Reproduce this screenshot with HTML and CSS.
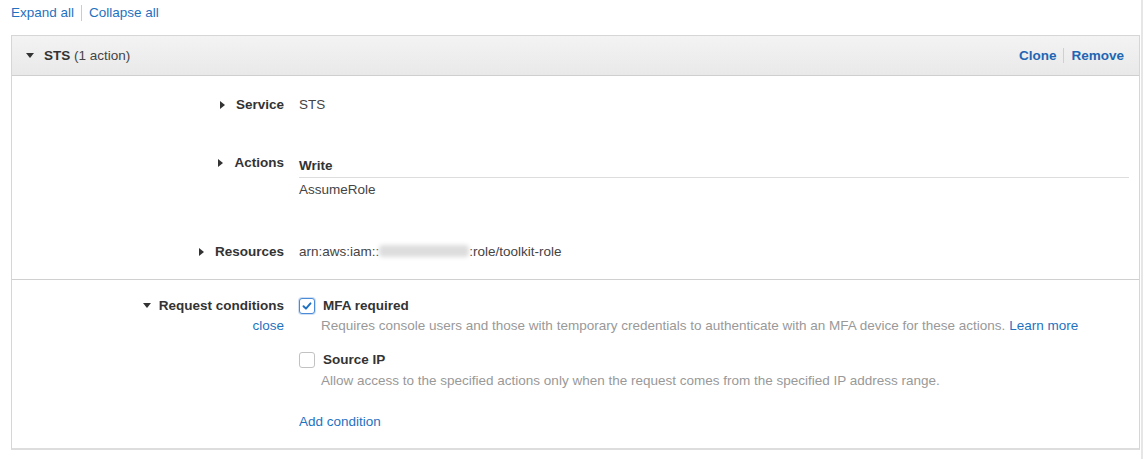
FILE: index.html
```html
<!DOCTYPE html>
<html>
<head>
<meta charset="utf-8">
<link rel="stylesheet" href="styles.css">
</head>
<body>
<div class="page">
  <div class="toolbar">
    <a class="link">Expand all</a><span class="sep"></span><a class="link">Collapse all</a>
  </div>
  <div class="panel">
    <div class="panel-head">
      <div class="head-title">
        <span class="tri-down"></span>
        <b>STS</b>&nbsp;(1 action)
      </div>
      <div class="head-actions">
        <a class="hlink">Clone</a><span class="sep sep-head"></span><a class="hlink">Remove</a>
      </div>
    </div>
    <div class="panel-body">
      <div class="row row-service">
        <div class="label"><span class="tri-right"></span>Service</div>
        <div class="value">STS</div>
      </div>
      <div class="row row-actions">
        <div class="label"><span class="tri-right"></span>Actions</div>
        <div class="value">
          <div class="group-title">Write</div>
          <div class="group-item">AssumeRole</div>
        </div>
      </div>
      <div class="row row-resources">
        <div class="label"><span class="tri-right"></span>Resources</div>
        <div class="value">arn:aws:iam::<span class="blur"></span>:role/toolkit-role</div>
      </div>
    </div>
    <div class="conditions">
      <div class="label cond-label">
        <div><span class="tri-down tri-small"></span>Request conditions</div>
        <a class="link">close</a>
      </div>
      <div class="cond-list">
        <div class="cond">
          <div class="cond-title">
            <span class="checkbox checked"><svg viewBox="0 0 16 16" width="16" height="16"><path d="M4 8.3 L6.8 11 L12 5" fill="none" stroke="#1f6fc5" stroke-width="2.2" stroke-linecap="round" stroke-linejoin="round"/></svg></span>
            <b>MFA required</b>
          </div>
          <div class="cond-desc">Requires console users and those with temporary credentials to authenticate with an MFA device for these actions. <a class="link">Learn more</a></div>
        </div>
        <div class="cond cond-2">
          <div class="cond-title">
            <span class="checkbox"></span>
            <b>Source IP</b>
          </div>
          <div class="cond-desc">Allow access to the specified actions only when the request comes from the specified IP address range.</div>
        </div>
        <a class="link add">Add condition</a>
      </div>
    </div>
  </div>
</div>
</body>
</html>
```

FILE: styles.css
```css
* { box-sizing: border-box; }
html, body { margin: 0; padding: 0; background: #fff; }
body {
  font-family: "Liberation Sans", Arial, sans-serif;
  font-size: 13.5px;
  color: #444;
}
.page {
  width: 1143px;
  height: 459px;
  border-right: 2px solid #e6e6e6;
}
.toolbar {
  height: 35px;
  padding: 4px 0 0 11px;
  font-size: 13.5px;
  line-height: 18px;
  display: flex;
  align-items: flex-start;
}
.link { color: #1f72c0; text-decoration: none; cursor: pointer; }
.sep {
  display: inline-block;
  width: 1px;
  height: 16px;
  background: #ccc;
  margin: 1px 7px 0;
}
.panel {
  width: 1129px;
  margin-left: 11px;
  border: 1px solid #d6d6d6;
  border-bottom: 2px solid #ddd;
}
.panel-head {
  height: 40px;
  background: linear-gradient(#f3f3f3, #e9e9e9);
  border-bottom: 1px solid #cfcfcf;
  display: flex;
  align-items: center;
  justify-content: space-between;
  padding: 0 15px 0 14px;
  font-size: 13.5px;
  color: #444;
}
.head-title { display: flex; align-items: center; }
.head-title b { color: #333; }
.tri-down {
  display: inline-block;
  width: 0; height: 0;
  border-left: 4.5px solid transparent;
  border-right: 4.5px solid transparent;
  border-top: 5px solid #333;
  margin-right: 10px;
}
.tri-small { margin-right: 8px; vertical-align: 2px; }
.tri-right {
  display: inline-block;
  width: 0; height: 0;
  border-top: 4.5px solid transparent;
  border-bottom: 4.5px solid transparent;
  border-left: 5px solid #333;
  margin-right: 11px;
  vertical-align: 0px;
}
.head-actions { display: flex; align-items: center; }
.hlink { color: #1f66b3; font-weight: bold; cursor: pointer; }
.sep-head { height: 15px; margin: 0 7px; background: #d0d0d0; }

.panel-body { padding: 20px 10px 18px 0; border-bottom: 1px solid #d0d0d0; }
.row { display: flex; line-height: 18px; }
.label {
  width: 272px;
  flex: none;
  text-align: right;
  font-weight: bold;
  color: #333;
}
.value { margin-left: 15px; flex: 1; color: #444; }
.row-actions { margin-top: 40px; }
.row-actions .value { padding-top: 3px; }
.group-title {
  font-weight: bold;
  color: #333;
  padding-bottom: 2px;
  border-bottom: 1px solid #ddd;
}
.group-item { margin-top: 3px; }
.row-resources { margin-top: 44px; }
.blur {
  display: inline-block;
  width: 90px;
  height: 12px;
  vertical-align: -1px;
  background: #ddd;
  border-radius: 4px;
  filter: blur(2px);
}

.conditions {
  display: flex;
  padding: 16px 0 16px 0;
  line-height: 20px;
}
.cond-label { display: flex; flex-direction: column; align-items: flex-end; }
.cond-label .link { font-weight: normal; }
.cond-list { margin-left: 15px; display: flex; flex-direction: column; align-items: flex-start; }
.cond-title { display: flex; align-items: center; color: #333; }
.checkbox {
  width: 16px; height: 16px;
  border: 1px solid #c2c2c2;
  border-radius: 3px;
  background: #fff;
  margin-right: 8px;
  display: inline-flex;
  align-items: center;
  justify-content: center;
}
.checkbox svg { display: block; }
.checkbox.checked { border-color: #4a8ad6; box-shadow: 0 0 0 1px #cfe0f5; }
.cond-desc { margin-left: 22px; color: #999; }
.cond-desc .link { color: #1f72c0; }
.cond-2 { margin-top: 14px; }
.cond-2 .cond-desc { margin-top: 1px; }
.add { margin-top: 21px; }
```
